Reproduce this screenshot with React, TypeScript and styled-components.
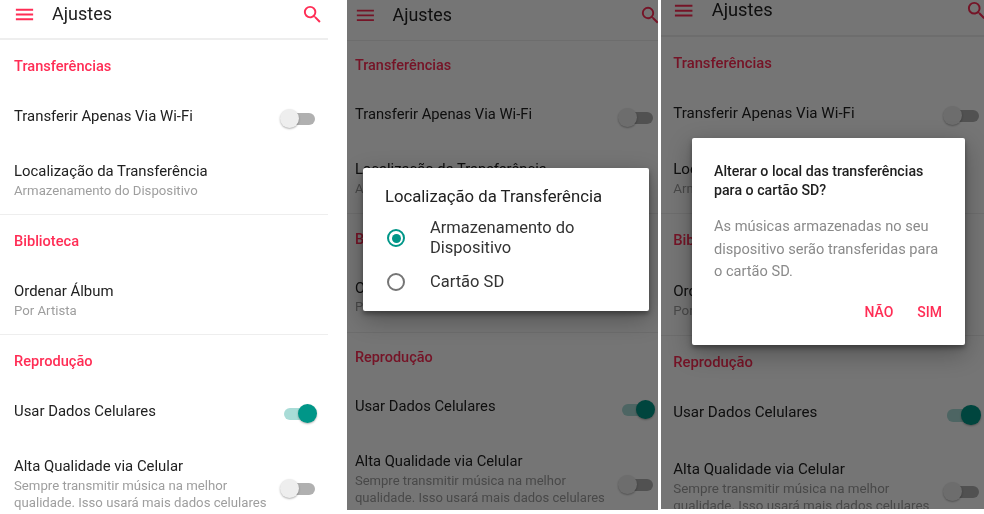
import styled, { createGlobalStyle } from 'styled-components';
import { MdMenu, MdSearch } from 'react-icons/md';

const PINK = '#ff2d55';
const TEAL = '#009688';

const GlobalStyle = createGlobalStyle`
  html, body { margin: 0; padding: 0; background: #fff; }
  body { font-family: Roboto, "Liberation Sans", sans-serif; }
  * { box-sizing: border-box; }
`;

const Page = styled.div`
  width: 984px; height: 514px; display: flex; align-items: flex-start;
  overflow: hidden; background: #fff;
  filter: blur(0.4px);
`;

const Panel = styled.div<{ $width: number; $height: number; $gap: number }>`
  position: relative; flex-shrink: 0; overflow: hidden;
  width: ${(p) => p.$width}px; height: ${(p) => p.$height}px; margin-left: ${(p) => p.$gap}px;
`;

const Screen = styled.div<{ $zoom: number; $offsetX: number; $offsetY: number }>`
  width: 328px; background: #fff;
  zoom: ${(p) => p.$zoom};
  margin-left: ${(p) => p.$offsetX}px; margin-top: ${(p) => p.$offsetY}px;
`;

const Header = styled.header`
  height: 40px; padding: 2px 4px 12px 13px;
  display: flex; align-items: center; justify-content: space-between;
  border-bottom: 2px solid #eeeeee;
  svg { color: ${PINK}; display: block; }
`;
const HeaderLeft = styled.div`
  display: flex; align-items: center; gap: 16px;
`;
const Title = styled.h1`
  margin: 0 0 1px; font-size: 18px; font-weight: 400; color: #212121;
`;

const Section = styled.section<{ $last?: boolean }>`
  border-bottom: ${(p) => (p.$last ? 'none' : '1px solid #eeeeee')};
`;
const SectionLabel = styled.div`
  height: 50px; padding: 17px 14px 0; line-height: 18px;
  font-size: 14.6px; font-weight: 500; color: ${PINK};
`;

const Row = styled.div<{ $tall?: boolean }>`
  display: flex; align-items: center; justify-content: space-between;
  padding: 0 13px 0 14px;
  min-height: ${(p) => (p.$tall ? 96 : 55)}px;
`;
const StackRow = styled.div`
  padding: 17px 14px 0; min-height: 69px;
`;
const RowBody = styled.div`
  margin-bottom: 4px;
`;
const TallBody = styled.div`
  align-self: flex-start; padding-top: 17px;
`;
const RowTitle = styled.div`
  font-size: 14.9px; line-height: 18px; color: #212121;
`;
const RowSub = styled.div`
  margin-top: 1.5px; font-size: 13.2px; line-height: 17px; color: #9e9e9e;
`;

const Toggle = styled.div<{ $on?: boolean }>`
  position: relative; width: 35px; height: 20px; flex-shrink: 0;
  margin: 2px ${(p) => (p.$on ? -2 : 0)}px 0 0;
  &::before {
    content: ''; position: absolute; top: 4px; height: 12px; left: 2px; right: ${(p) => (p.$on ? 2 : 0)}px;
    border-radius: 6px; background: ${(p) => (p.$on ? '#a9dcd7' : '#b0b0b0')};
  }
  &::after {
    content: ''; position: absolute; top: 0; width: 19px; height: 19px; border-radius: 50%;
    left: ${(p) => (p.$on ? 16 : 0)}px;
    background: ${(p) => (p.$on ? TEAL : '#eeeeee')};
    box-shadow: 0 1px 2px rgba(0, 0, 0, 0.3);
  }
`;

const Scrim = styled.div<{ $left: number; $top: number }>`
  position: absolute; inset: 0;
  background: rgba(0, 0, 0, 0.54);
  padding: ${(p) => p.$top}px 0 0 ${(p) => p.$left}px;
`;

const Dialog = styled.div<{ $width: number; $height: number }>`
  width: ${(p) => p.$width}px; height: ${(p) => p.$height}px;
  background: #fff; border-radius: 2px;
  box-shadow: 0 3px 5px rgba(0, 0, 0, 0.35), 0 8px 24px rgba(0, 0, 0, 0.3);
`;

const ListDialog = styled(Dialog)`
  padding: 19px 22px 0;
`;
const ListTitle = styled.div`
  font-size: 16.7px; line-height: 20px; color: #212121;
`;
const OptionList = styled.div`
  margin-top: 11px; display: flex; flex-direction: column; gap: 14px;
`;
const Option = styled.div`
  display: flex; align-items: center; gap: 25px; padding-left: 2px;
`;
const Radio = styled.span<{ $checked?: boolean }>`
  width: 18px; height: 18px; border-radius: 50%; flex-shrink: 0;
  border: 2px solid ${(p) => (p.$checked ? TEAL : '#757575')};
  display: flex; align-items: center; justify-content: center;
  &::after {
    content: ''; width: 9px; height: 9px; border-radius: 50%;
    background: ${(p) => (p.$checked ? TEAL : 'transparent')};
  }
`;
const OptionLabel = styled.div`
  font-size: 16.5px; line-height: 20px; color: #333333;
`;

const ConfirmDialog = styled(Dialog)`
  padding: 24px 22px 0;
`;
const ConfirmTitle = styled.div`
  font-size: 14.2px; font-weight: 500; line-height: 19px; color: #212121;
`;
const ConfirmBody = styled.div`
  margin-top: 15px; font-size: 14.6px; line-height: 22.5px; color: #8a8a8a;
`;
const Actions = styled.div`
  margin-top: 20px; display: flex; justify-content: flex-end; gap: 24px; padding-right: 1px;
`;
const Action = styled.span`
  font-size: 14px; font-weight: 500; line-height: 18px; color: ${PINK};
`;

function SettingsScreen({ zoom = 1, offsetX = 0, offsetY = 0 }: { zoom?: number; offsetX?: number; offsetY?: number }) {
  return (
    <Screen $zoom={zoom} $offsetX={offsetX} $offsetY={offsetY}>
      <Header>
        <HeaderLeft>
          <MdMenu size={23} />
          <Title>Ajustes</Title>
        </HeaderLeft>
        <MdSearch size={23} />
      </Header>

      <Section>
        <SectionLabel>Transferências</SectionLabel>
        <Row>
          <RowBody><RowTitle>Transferir Apenas Via Wi-Fi</RowTitle></RowBody>
          <Toggle />
        </Row>
        <StackRow>
          <RowTitle>Localização da Transferência</RowTitle>
          <RowSub>Armazenamento do Dispositivo</RowSub>
        </StackRow>
      </Section>

      <Section>
        <SectionLabel>Biblioteca</SectionLabel>
        <StackRow>
          <RowTitle>Ordenar Álbum</RowTitle>
          <RowSub>Por Artista</RowSub>
        </StackRow>
      </Section>

      <Section $last>
        <SectionLabel>Reprodução</SectionLabel>
        <Row>
          <RowBody><RowTitle>Usar Dados Celulares</RowTitle></RowBody>
          <Toggle $on />
        </Row>
        <Row $tall>
          <TallBody>
            <RowTitle>Alta Qualidade via Celular</RowTitle>
            <RowSub>Sempre transmitir música na melhor<br />qualidade. Isso usará mais dados celulares</RowSub>
          </TallBody>
          <Toggle />
        </Row>
      </Section>
    </Screen>
  );
}

export default function App() {
  return (
    <>
      <GlobalStyle />
      <Page>
        <Panel $width={328} $height={514} $gap={0}>
          <SettingsScreen />
        </Panel>

        <Panel $width={311} $height={510} $gap={19}>
          <SettingsScreen zoom={0.99} offsetX={-6} offsetY={1} />
          <Scrim $left={16} $top={168}>
            <ListDialog $width={286} $height={143}>
              <ListTitle>Localização da Transferência</ListTitle>
              <OptionList>
                <Option>
                  <Radio $checked />
                  <OptionLabel>Armazenamento do<br />Dispositivo</OptionLabel>
                </Option>
                <Option>
                  <Radio />
                  <OptionLabel>Cartão SD</OptionLabel>
                </Option>
              </OptionList>
            </ListDialog>
          </Scrim>
        </Panel>

        <Panel $width={323} $height={509} $gap={3}>
          <SettingsScreen zoom={1.015} offsetX={-2} offsetY={-4} />
          <Scrim $left={31} $top={138}>
            <ConfirmDialog $width={273} $height={207}>
              <ConfirmTitle>Alterar o local das transferências<br />para o cartão SD?</ConfirmTitle>
              <ConfirmBody>As músicas armazenadas no seu<br />dispositivo serão transferidas para<br />o cartão SD.</ConfirmBody>
              <Actions>
                <Action>NÃO</Action>
                <Action>SIM</Action>
              </Actions>
            </ConfirmDialog>
          </Scrim>
        </Panel>
      </Page>
    </>
  );
}
